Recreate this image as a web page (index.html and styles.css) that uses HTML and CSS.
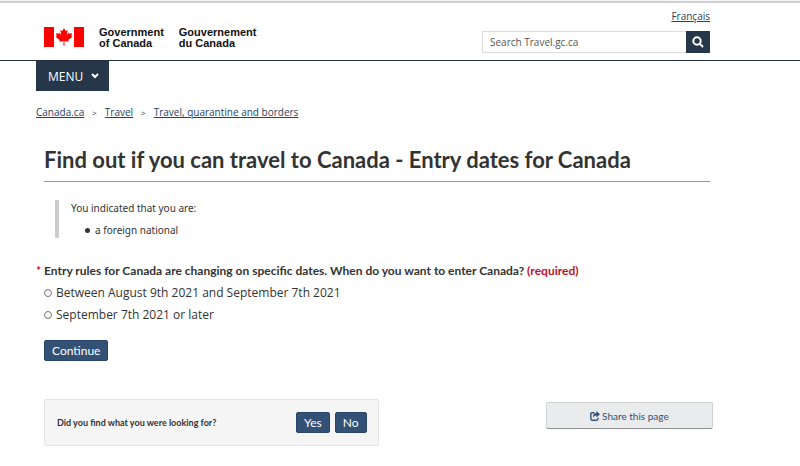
FILE: index.html
```html
<!DOCTYPE html>
<html lang="en">
<head>
<meta charset="utf-8">
<title>Find out if you can travel to Canada</title>
<link rel="stylesheet" href="styles.css">
</head>
<body>
<header class="site-header">
  <div class="brand-row">
    <a class="brand" href="#">
      <svg class="flag" viewBox="0 0 40 20" aria-hidden="true">
        <path fill="#f00" d="M0 0h10v20H0zM30 0h10v20H30zM20 1l-1.7 3.1-2-1 .9 4.8-2.2-2.3-.5 1.2-2.6-.5.9 2.7-1.3.7 4.2 3.4-.5 1.6 4.4-.7-.2 4.4h1.2l-.2-4.4 4.4.7-.5-1.6 4.2-3.4-1.3-.7.9-2.7-2.6.5-.5-1.2-2.2 2.3.9-4.8-2 1z"/>
      </svg>
      <span class="brand-name">Government<br>of Canada</span>
      <span class="brand-name" lang="fr">Gouvernement<br>du Canada</span>
    </a>
    <div class="tools">
      <a class="language" href="#" lang="fr">Français</a>
      <form class="search">
        <input class="search-box" type="search" placeholder="Search Travel.gc.ca" aria-label="Search Travel.gc.ca">
        <button class="search-button" type="button" aria-label="Search">
          <svg class="search-icon" viewBox="0 0 12 12" aria-hidden="true"><circle cx="5" cy="5" r="3.7"/><path d="M8 8l3 3"/></svg>
        </button>
      </form>
    </div>
  </div>
</header>
<nav class="menu">
  <button class="menu-button" type="button">MENU
    <svg class="chevron" viewBox="0 0 8 6" aria-hidden="true"><path d="M1 1l3 3 3-3"/></svg>
  </button>
</nav>
<nav class="breadcrumb" aria-label="Breadcrumb">
  <a href="#">Canada.ca</a><span class="separator">&gt;</span><a href="#">Travel</a><span class="separator">&gt;</span><a href="#">Travel, quarantine and borders</a>
</nav>
<main class="content">
  <h1 class="title">Find out if you can travel to Canada - Entry dates for Canada</h1>
  <blockquote class="answers">
    <p class="answers-intro">You indicated that you are:</p>
    <ul class="answers-list"><li class="answer">a foreign national</li></ul>
  </blockquote>
  <form>
    <fieldset class="question">
      <legend class="legend"><span class="star">*</span> Entry rules for Canada are changing on specific dates. When do you want to enter Canada? <span class="required">(required)</span></legend>
      <label class="option"><input class="radio" type="radio" name="entry">Between August 9th 2021 and September 7th 2021</label>
      <label class="option"><input class="radio" type="radio" name="entry">September 7th 2021 or later</label>
    </fieldset>
    <button class="button" type="button">Continue</button>
  </form>
  <div class="page-tools">
    <section class="feedback">
      <h2 class="feedback-title">Did you find what you were looking for?</h2>
      <div class="feedback-actions">
        <button class="button" type="button">Yes</button>
        <button class="button" type="button">No</button>
      </div>
    </section>
    <button class="share" type="button">
      <svg class="share-icon" viewBox="0 0 10 10" aria-hidden="true">
        <path class="share-frame" d="M4.5 1.7H2.2Q.8 1.7.8 3.1V7.8Q.8 9.2 2.2 9.2H6.6Q8 9.2 8 7.8V6.8"/>
        <path class="share-arrow" d="M6.4 0L10 3.2 6.4 6.4V4.6Q3.8 4.3 3.6 7 1.8 2.2 6.4 1.9z"/>
      </svg>Share this page
    </button>
  </div>
</main>
</body>
</html>
```
FILE: styles.css
```css
* {
  box-sizing: border-box;
}

body {
  margin: 0;
  border-top: 1px solid #f4f4f6;
  background: #fff;
  color: #333;
  font-family: "Open Sans", "Noto Sans", sans-serif;
  font-size: 10px;
}

button,
input {
  margin: 0;
  font-family: inherit;
}

a {
  color: #284162;
}

.site-header {
  padding: 7px 90px 7px 44px;
  border-top: 2px solid #cfd0d4;
  border-bottom: 1px solid #26303c;
}

.brand-row {
  display: flex;
  justify-content: space-between;
}

.brand {
  display: flex;
  align-items: flex-start;
  gap: 15px;
  padding-top: 17px;
  color: #111;
  text-decoration: none;
}

.flag {
  width: 40px;
  height: 20px;
}

.brand-name {
  font: bold 11px/11px "Liberation Sans", sans-serif;
}

.tools {
  display: flex;
  flex-direction: column;
  align-items: flex-end;
  gap: 9px;
  width: 228px;
}

.language {
  line-height: 12px;
}

.search {
  display: flex;
  width: 100%;
}

.search-box {
  flex: 1;
  min-width: 0;
  height: 22px;
  padding: 0 7px;
  border: 1px solid #ddd;
  border-right: 0;
  border-radius: 0;
  background: #fff;
  font-size: 10px;
}

.search-box::placeholder {
  color: #555;
}

.search-button {
  display: flex;
  align-items: center;
  justify-content: center;
  width: 24px;
  padding: 0;
  border: 0;
  background: #26374a;
}

.search-icon,
.chevron {
  fill: none;
  stroke: #fff;
  stroke-width: 2;
}

.search-icon {
  width: 12px;
  height: 12px;
}

.menu {
  padding-left: 36px;
}

.menu-button {
  display: flex;
  align-items: center;
  gap: 8px;
  height: 30px;
  padding: 0 10px 0 12px;
  border: 0;
  background: #26374a;
  color: #fff;
  font-size: 12px;
}

.chevron {
  width: 8px;
  height: 6px;
}

.breadcrumb {
  padding: 14px 36px 0;
  line-height: 14px;
}

.separator {
  margin: 0 8px;
  font-size: 8px;
}

.content {
  padding: 0 90px 20px 44px;
}

.title {
  margin: 26px 0 18px;
  padding-bottom: 7px;
  border-bottom: 1px solid #8c9ba7;
  font: bold 22px/28px Lato, sans-serif;
}

.answers {
  margin: 0 0 24px 11px;
  padding-left: 12px;
  border-left: 4px solid #ccc;
  font-family: "Noto Sans", sans-serif;
  line-height: 16px;
}

.answers-intro {
  margin: 0;
}

.answers-list {
  margin: 6px 0 0;
  padding-left: 14px;
  list-style: none;
}

.answer {
  display: flex;
  align-items: center;
  gap: 5px;
}

.answer::before {
  content: "";
  width: 5px;
  height: 5px;
  border-radius: 50%;
  background: #333;
}

.question {
  margin: 0 0 14px;
  padding: 0;
  border: 0;
}

.legend {
  margin: 0 0 2px -8px;
  padding: 0;
  font: bold 12px/18px Lato, sans-serif;
}

.star,
.required {
  color: #c3101f;
}

.option {
  display: flex;
  align-items: center;
  gap: 4px;
  font-size: 12px;
  line-height: 22px;
}

.radio {
  appearance: none;
  width: 8px;
  height: 8px;
  border: 1px solid #767676;
  border-radius: 50%;
  background: #fff;
}

.radio:checked {
  background: #335075;
}

.button {
  height: 21px;
  padding: 0 7px;
  border: 1px solid #2b4568;
  border-radius: 2px;
  background: #335075;
  color: #fff;
  font: 12px/19px Lato, sans-serif;
}

.page-tools {
  display: flex;
  align-items: flex-start;
  justify-content: space-between;
  margin: 38px -3px 0 0;
}

.feedback {
  display: flex;
  align-items: center;
  justify-content: space-between;
  width: 50%;
  height: 47px;
  padding: 0 11px 0 12px;
  border: 1px solid #e3e3e3;
  border-radius: 2px;
  background: #f5f5f5;
}

.feedback-title {
  margin: 0;
  font: bold 9px/14px Lato, sans-serif;
}

.feedback-actions {
  display: flex;
  gap: 5px;
}

.share {
  display: flex;
  align-items: center;
  justify-content: center;
  gap: 2px;
  width: 25%;
  height: 27px;
  margin-top: 3px;
  border: 1px solid #d0d1d5;
  border-bottom-color: #8e8f94;
  border-radius: 2px;
  background: #eaebed;
  color: #335075;
  font: 10px/14px Lato, sans-serif;
}

.share-icon {
  width: 10px;
  height: 10px;
}

.share-frame {
  fill: none;
  stroke: #335075;
  stroke-width: 1.4;
}

.share-arrow {
  fill: #335075;
}
```
